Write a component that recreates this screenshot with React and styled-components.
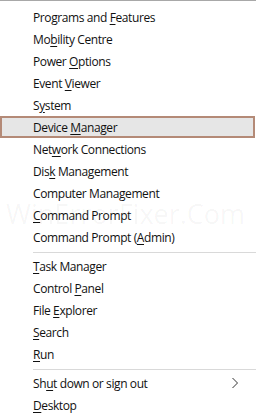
import React from 'react';
import styled, { createGlobalStyle } from 'styled-components';

const Global = createGlobalStyle`
    html, body {
        margin: 0;
        padding: 0;
        background: #fff;
    }
`;

const Menu = styled.div`
    position: relative;
    width: 256px;
    height: 417px;
    box-sizing: border-box;
    border-top: 1px solid #a8a8a8;
    padding-top: 5px;
    background: #fff;
    font-family: "Open Sans", "Noto Sans", sans-serif;
    font-size: 12px;
    letter-spacing: -0.4px;
    color: #111;
    overflow: hidden;
`;

const Item = styled.div`
    height: 22px;
    box-sizing: border-box;
    display: flex;
    align-items: center;
    padding: 0 12px 0 31px;
    margin-right: 1px;
    border: 2px solid ${ p => p.selected ? '#b48a77' : 'transparent' };
    background: ${ p => p.selected ? '#e6e6e6' : 'transparent' };
`;

const Label = styled.span`
    flex: 1;
    white-space: nowrap;
`;

const Key = styled.span`
    text-decoration: underline;
    text-underline-offset: 2px;
    text-decoration-thickness: 1px;
`;

const Chevron = styled.svg`
    width: 8px;
    height: 12px;
    margin-right: 2px;
`;

const Separator = styled.hr`
    border: 0;
    height: 1px;
    background: #d9d9d9;
    margin: 4px 0 2px 33px;
`;

const Watermark = styled.div`
    position: absolute;
    left: 6px;
    top: 194px;
    font-size: 27px;
    letter-spacing: 0;
    color: rgba(0, 0, 0, 0.045);
    white-space: nowrap;
    pointer-events: none;
`;

const groups = [
    [
        [ 'Programs and ', 'F', 'eatures' ],
        [ 'Mo', 'b', 'ility Centre' ],
        [ 'Power ', 'O', 'ptions' ],
        [ 'Event ', 'V', 'iewer' ],
        [ 'S', 'y', 'stem' ],
        [ 'Device ', 'M', 'anager', true ],
        [ 'Net', 'w', 'ork Connections' ],
        [ 'Dis', 'k', ' Management' ],
        [ 'Computer Mana', 'g', 'ement' ],
        [ '', 'C', 'ommand Prompt' ],
        [ 'Command Prompt (', 'A', 'dmin)' ],
    ],
    [
        [ '', 'T', 'ask Manager' ],
        [ 'Control ', 'P', 'anel' ],
        [ 'File ', 'E', 'xplorer' ],
        [ '', 'S', 'earch' ],
        [ '', 'R', 'un' ],
    ],
    [
        [ 'Sh', 'u', 't down or sign out', false, true ],
        [ '', 'D', 'esktop' ],
    ],
];

const App = () =>
    <>
        <Global />
        <Menu>
            { groups.map( ( group, gi ) =>
                <React.Fragment key={ gi }>
                    { gi > 0 && <Separator /> }
                    { group.map( ( [ pre, key, post, selected, sub ] ) =>
                        <Item key={ pre + key + post } selected={ selected }>
                            <Label>{ pre }<Key>{ key }</Key>{ post }</Label>
                            { sub &&
                                <Chevron viewBox="0 0 8 12">
                                    <path d="M1.5 1 L6.5 6 L1.5 11" fill="none" stroke="#333" strokeWidth="1" />
                                </Chevron> }
                        </Item>
                    ) }
                </React.Fragment>
            ) }
            <Watermark>WinErrorFixer.Com</Watermark>
        </Menu>
    </>;

export default App;
